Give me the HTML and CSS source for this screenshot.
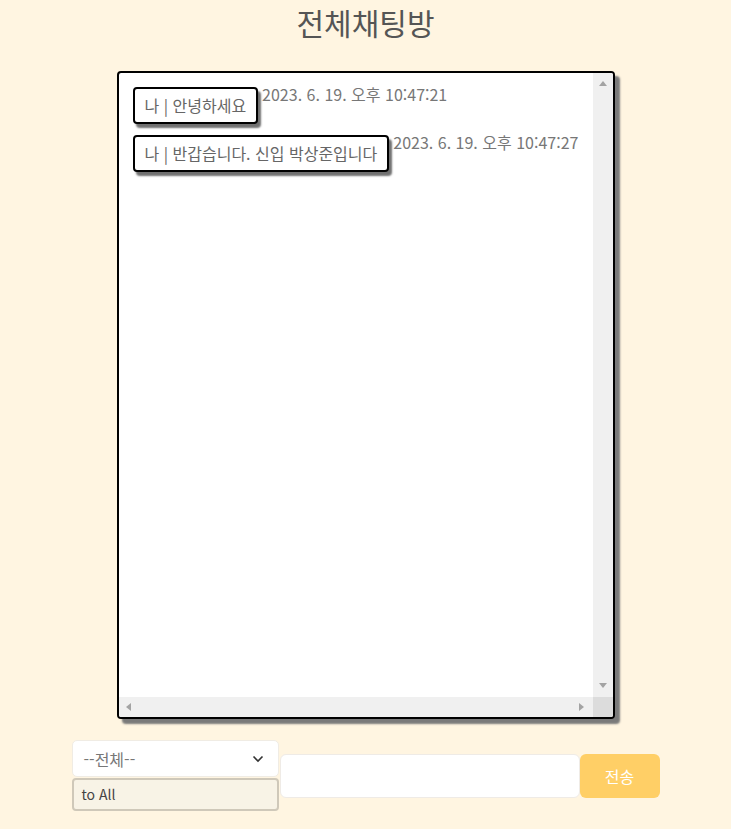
FILE: index.html
```html
<!DOCTYPE html>
<html lang="ko">
<head>
<meta charset="utf-8">
<title>전체채팅방</title>
<link rel="stylesheet" href="styles.css">
</head>
<body>
<main class="page">
  <h1 class="title">전체채팅방</h1>
  <section class="chat">
    <div class="log">
      <div class="msg">
        <div class="bubble">나 | 안녕하세요</div>
        <span class="time">2023. 6. 19. 오후 10:47:21</span>
      </div>
      <div class="msg">
        <div class="bubble">나 | 반갑습니다. 신입 박상준입니다</div>
        <span class="time">2023. 6. 19. 오후 10:47:27</span>
      </div>
    </div>
    <div class="vbar"><span class="arr up"></span><span class="arr down"></span></div>
    <div class="hbar"><span class="arr left"></span><span class="arr right"></span></div>
    <div class="corner"></div>
  </section>
  <form class="composer">
    <div class="target">
      <div class="select">
        <span>--전체--</span>
        <svg class="chev" width="12" height="8" viewBox="0 0 12 8"><path d="M1.5 1.5 L6 6 L10.5 1.5" fill="none" stroke="#333" stroke-width="1.6"/></svg>
      </div>
      <div class="to">to All</div>
    </div>
    <div class="input"></div>
    <button class="send" type="button">전송</button>
  </form>
</main>
</body>
</html>
```

FILE: styles.css
```css
html, body {
  margin: 0;
  padding: 0;
  background: #fff5e1;
}
body {
  font-family: "Noto Sans CJK KR", "Noto Sans", sans-serif;
  color: #666;
}
.page {
  display: flex;
  flex-direction: column;
  align-items: center;
}
.title {
  margin: 0;
  padding-top: 1px;
  height: 70px;
  font-size: 30px;
  font-weight: 400;
  color: #555;
  line-height: 43px;
}
.chat {
  box-sizing: border-box;
  width: 498px;
  height: 648px;
  background: #fff;
  border: 2px solid #000;
  border-radius: 4px;
  box-shadow: 5px 5px 2px #7a7a7a;
  display: grid;
  grid-template-columns: 1fr 20px;
  grid-template-rows: 1fr 20px;
  overflow: hidden;
}
.log {
  padding: 14px 0 0 14px;
  display: flex;
  flex-direction: column;
  gap: 11px;
  overflow: hidden;
}
.vbar {
  background: #f0f0f0;
  display: flex;
  flex-direction: column;
  justify-content: space-between;
  align-items: center;
  padding: 8px 0 9px;
}
.hbar {
  background: #f0f0f0;
  display: flex;
  justify-content: space-between;
  align-items: center;
  padding: 0 9px 0 7px;
}
.corner {
  background: #dcdcdc;
}
.arr {
  width: 0;
  height: 0;
  border-style: solid;
  border-color: transparent;
}
.arr.up {
  border-width: 0 4.5px 5px;
  border-bottom-color: #a3a3a3;
}
.arr.down {
  border-width: 5px 4.5px 0;
  border-top-color: #a3a3a3;
}
.arr.left {
  border-width: 4.5px 5px 4.5px 0;
  border-right-color: #a3a3a3;
}
.arr.right {
  border-width: 4.5px 0 4.5px 5px;
  border-left-color: #a3a3a3;
}
.msg {
  display: flex;
  align-items: flex-start;
  gap: 4px;
}
.bubble {
  box-sizing: border-box;
  height: 37px;
  padding: 0 10px;
  border: 2px solid #000;
  border-radius: 4px;
  box-shadow: 3px 4px 2px #707070;
  background: #fff;
  font-size: 16px;
  line-height: 33px;
  color: #666;
  white-space: nowrap;
}
.time {
  margin-top: -2px;
  font-size: 16px;
  line-height: 18px;
  color: #777;
  white-space: nowrap;
}
.composer {
  margin: 21px 0 0;
  display: flex;
  align-items: center;
}
.target {
  display: flex;
  flex-direction: column;
  gap: 1px;
  width: 207px;
}
.select {
  box-sizing: border-box;
  height: 37px;
  background: #fff;
  border: 1px solid #f0ece4;
  border-radius: 5px;
  display: flex;
  align-items: center;
  justify-content: space-between;
  padding: 0 14px 0 11px;
  font-size: 16px;
  color: #777;
}
.to {
  box-sizing: border-box;
  height: 33px;
  background: #f8f3e6;
  border: 2px solid #cfc8b9;
  border-radius: 4px;
  padding: 0 8px;
  font-size: 14px;
  line-height: 29px;
  color: #444;
}
.input {
  box-sizing: border-box;
  width: 300px;
  height: 44px;
  margin-left: 1px;
  background: #fff;
  border: 1px solid #efebe6;
  border-radius: 6px;
}
.send {
  width: 80px;
  height: 44px;
  border: 0;
  border-radius: 6px;
  background: #ffcf66;
  color: #fff;
  font-family: inherit;
  font-size: 16px;
}
```
